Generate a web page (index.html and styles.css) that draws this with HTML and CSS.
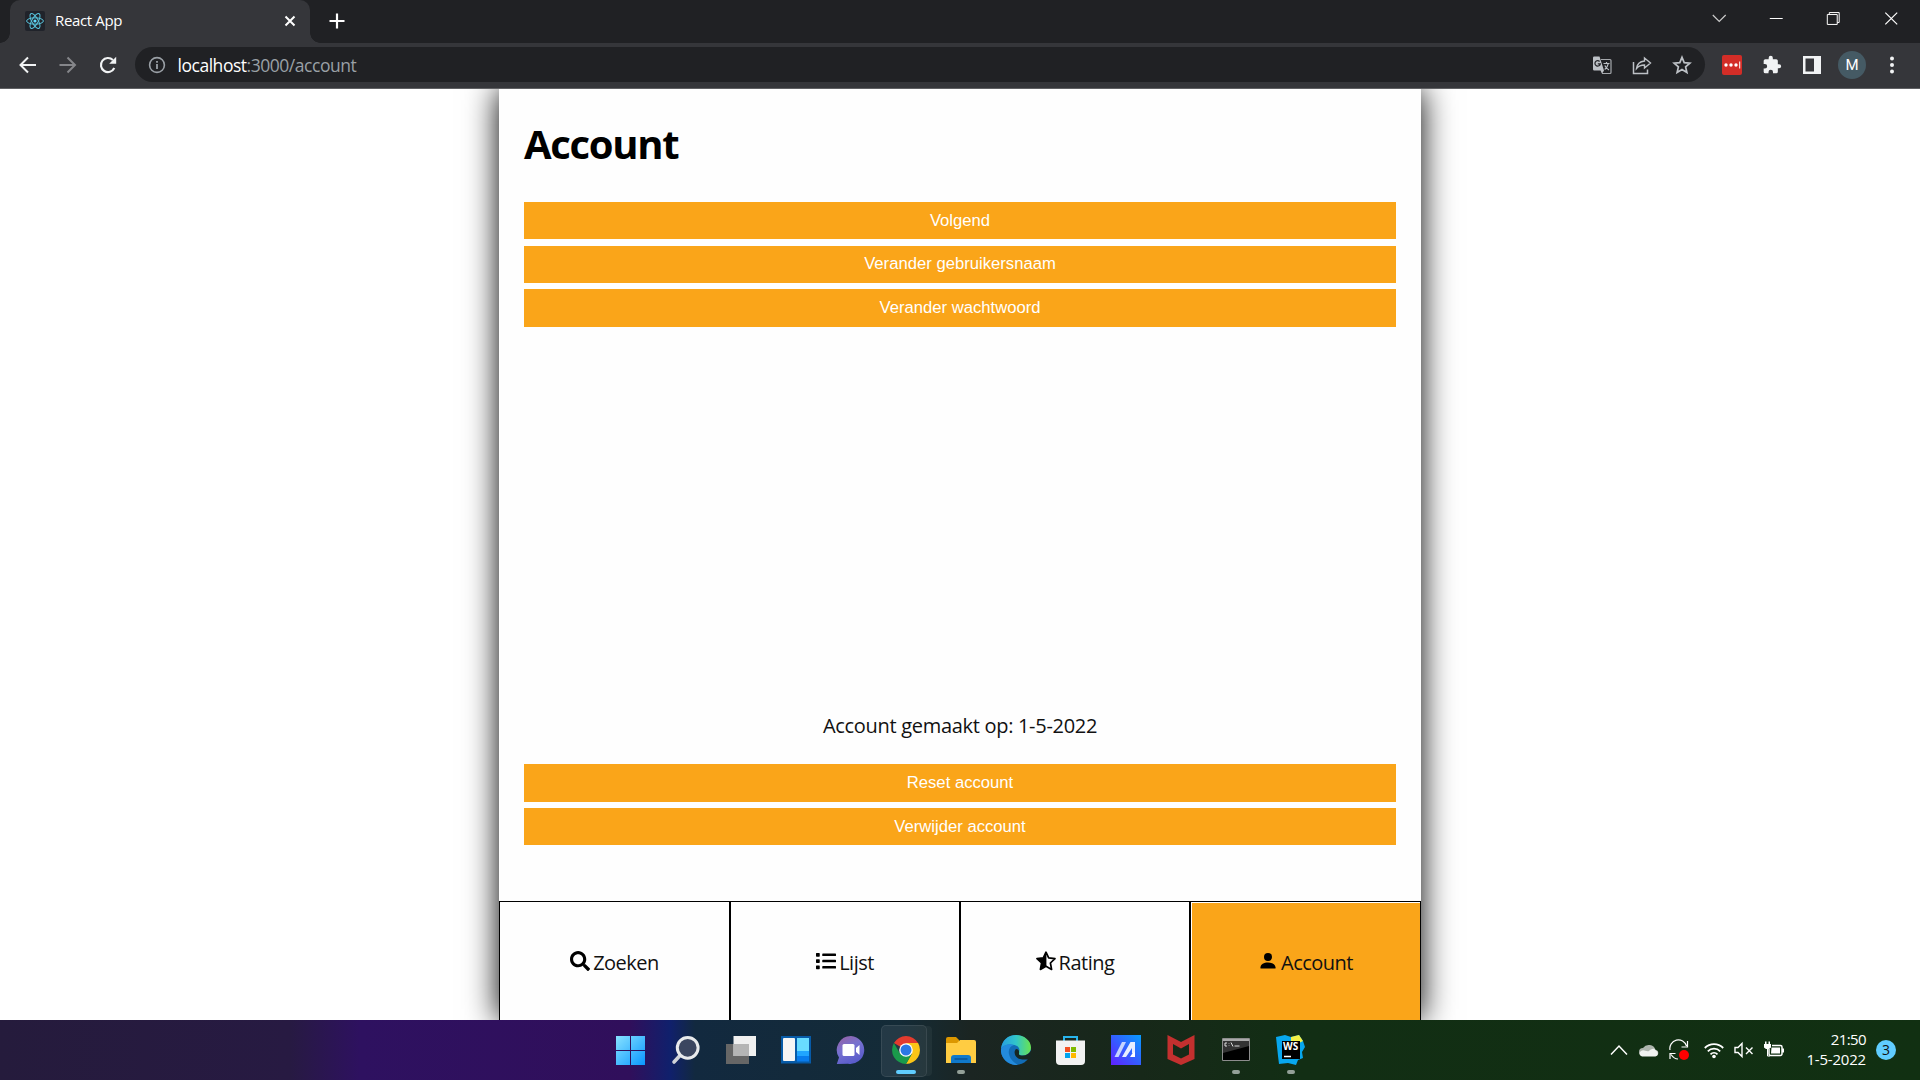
FILE: index.html
```html
<!DOCTYPE html>
<html lang="nl">
<head>
<meta charset="utf-8">
<title>React App</title>
<link rel="stylesheet" href="styles.css">
</head>
<body>
<header class="tabstrip">
  <div class="tab">
    <svg class="favicon" viewBox="0 0 20 20"><rect width="20" height="20" rx="2" fill="#20232a"/><g fill="none" stroke="#58c4dc" stroke-width="1"><ellipse cx="10" cy="10" rx="8.4" ry="3.2"/><ellipse cx="10" cy="10" rx="8.4" ry="3.2" transform="rotate(60 10 10)"/><ellipse cx="10" cy="10" rx="8.4" ry="3.2" transform="rotate(120 10 10)"/></g><circle cx="10" cy="10" r="1.6" fill="#61dafb"/></svg>
    <span class="tab-title">React App</span>
    <svg class="tab-close" viewBox="0 0 12 12"><path d="M1.5 1.5l9 9M10.5 1.5l-9 9" stroke="#fff" stroke-width="2"/></svg>
  </div>
  <svg class="new-tab" viewBox="0 0 16 16"><path d="M8 .5v15M.5 8h15" stroke="#fff" stroke-width="2.2"/></svg>
  <div class="window-controls">
    <svg viewBox="0 0 58 37"><path d="M23 15l6.500 6.500L36 15" fill="none" stroke="#ccc" stroke-width="1.2"/></svg>
    <svg viewBox="0 0 58 37"><path d="M22 18.500h13" stroke="#fff"/></svg>
    <svg viewBox="0 0 58 37"><path d="M22.500 14.500h10v10h-10zM24.500 14.500v-2h10v10h-2" fill="none" stroke="#fff"/></svg>
    <svg viewBox="0 0 58 37"><path d="M22.500 12.500l12 12M34.500 12.500l-12 12" stroke="#fff" stroke-width="1.2"/></svg>
  </div>
</header>
<div class="toolbar">
  <svg class="tool" viewBox="0 0 20 20"><path d="M18 10H3M10 2.500L2.500 10l7.500 7.500" fill="none" stroke="#f1f3f4" stroke-width="2"/></svg>
  <svg class="tool" viewBox="0 0 20 20"><path d="M1.500 10h15M9.500 2.500L17 10l-7.500 7.500" fill="none" stroke="#85868a" stroke-width="2"/></svg>
  <svg class="tool" viewBox="0 0 20 20"><path d="M16.300 13A7 7 0 1 1 14.900 5.100" fill="none" stroke="#f1f3f4" stroke-width="2.100"/><path d="M18.200 1.800v7h-7z" fill="#f1f3f4"/></svg>
  <div class="omnibox">
    <svg class="info" viewBox="0 0 18 18"><circle cx="9" cy="9" r="7.400" fill="none" stroke="#9aa0a6" stroke-width="1.600"/><path d="M9 8v5M9 5v1.800" stroke="#9aa0a6" stroke-width="1.800"/></svg>
    <span class="url"><b>localhost</b>:3000/account</span>
    <svg class="tool" viewBox="0 0 20 20"><path d="M9 4.500h9a1 1 0 0 1 1 1v12a1 1 0 0 1-1 1h-8" fill="none" stroke="#a5a8ac" stroke-width="1.200"/><path d="M2.200 1.500h5.300L12 15.500H2.200A1.200 1.200 0 0 1 1 14.300V2.700a1.200 1.200 0 0 1 1.200-1.200zM8.500 15.500H12l-2 3.300z" fill="#bdc1c6"/><path d="M7.600 6.500a2.700 2.700 0 1 0 .7 2.300H5.800" fill="none" stroke="#26272b" stroke-width="1.300"/><path d="M11.500 8.500h6M14.500 7v1.500M16.300 8.500c-.5 3-1.800 4.500-3.600 6M12.800 10.500c1 2 2.500 3.500 4.200 4.500" fill="none" stroke="#bdc1c6" stroke-width="1.200"/></svg>
    <svg class="tool" viewBox="0 0 20 20"><path d="M1.500 7v11.500h14v-4" fill="none" stroke="#bdc1c6" stroke-width="1.500"/><path d="M12.500 3l6 5-6 5v-3c-3.500 0-6 1-8 3.500C5 9.500 7.500 6.500 12.500 6z" fill="none" stroke="#bdc1c6" stroke-width="1.400"/></svg>
    <svg class="tool" viewBox="0 0 20 20"><path d="M10 2.300l2.200 5.300 5.700.5-4.300 3.800 1.300 5.600-4.900-3-4.900 3 1.300-5.600-4.300-3.800 5.700-.5z" fill="none" stroke="#bdc1c6" stroke-width="1.700"/></svg>
  </div>
  <svg class="tool ext" viewBox="0 0 20 20"><rect width="20" height="20" rx="2" fill="#d32d27"/><g fill="#fff"><circle cx="4" cy="10" r="1.700"/><circle cx="9" cy="10" r="1.700"/><circle cx="14" cy="10" r="1.700"/><path d="M17.200 6.500h1v7h-1z"/></g></svg>
  <svg class="tool" viewBox="0 0 24 24"><path d="M20.500 11H19V7a2 2 0 0 0-2-2h-4V3.500a2.500 2.500 0 0 0-5 0V5H4a2 2 0 0 0-2 2v3.800h1.500a2.700 2.700 0 0 1 0 5.400H2V20a2 2 0 0 0 2 2h3.800v-1.500a2.700 2.700 0 0 1 5.400 0V22H17a2 2 0 0 0 2-2v-4h1.500a2.500 2.500 0 0 0 0-5z" fill="#f1f3f4"/></svg>
  <svg class="tool" viewBox="0 0 20 20"><path d="M1 1h18v18H1zM3.500 3.500v13h8.500v-13z" fill="#f1f3f4" fill-rule="evenodd"/></svg>
  <span class="avatar">M</span>
  <svg class="tool" viewBox="0 0 20 20"><g fill="#f1f3f4"><circle cx="10" cy="3.500" r="2"/><circle cx="10" cy="10" r="2"/><circle cx="10" cy="16.500" r="2"/></g></svg>
</div>
<main class="viewport">
  <div class="app">
    <section class="page">
      <h1>Account</h1>
      <div class="actions"><button>Volgend</button><button>Verander gebruikersnaam</button><button>Verander wachtwoord</button></div>
      <p class="created">Account gemaakt op: 1-5-2022</p>
      <div class="actions"><button>Reset account</button><button>Verwijder account</button></div>
    </section>
    <nav class="nav">
      <a class="item"><svg viewBox="0 0 512 512"><path d="M505 442.700L405.300 343c-4.500-4.500-10.600-7-17-7H372c27.600-35.300 44-79.700 44-128C416 93.100 322.900 0 208 0S0 93.100 0 208s93.100 208 208 208c48.300 0 92.700-16.400 128-44v16.300c0 6.400 2.500 12.500 7 17l99.700 99.700c9.400 9.400 24.600 9.400 33.900 0l28.300-28.300c9.400-9.400 9.400-24.600.1-34zM208 336c-70.700 0-128-57.200-128-128 0-70.700 57.200-128 128-128 70.700 0 128 57.200 128 128 0 70.700-57.200 128-128 128z"/></svg><span>Zoeken</span></a>
      <a class="item"><svg viewBox="0 0 512 512"><path d="M80 368H16a16 16 0 0 0-16 16v64a16 16 0 0 0 16 16h64a16 16 0 0 0 16-16v-64a16 16 0 0 0-16-16zm0-320H16A16 16 0 0 0 0 64v64a16 16 0 0 0 16 16h64a16 16 0 0 0 16-16V64a16 16 0 0 0-16-16zm0 160H16a16 16 0 0 0-16 16v64a16 16 0 0 0 16 16h64a16 16 0 0 0 16-16v-64a16 16 0 0 0-16-16zm416 176H176a16 16 0 0 0-16 16v32a16 16 0 0 0 16 16h320a16 16 0 0 0 16-16v-32a16 16 0 0 0-16-16zm0-320H176a16 16 0 0 0-16 16v32a16 16 0 0 0 16 16h320a16 16 0 0 0 16-16V80a16 16 0 0 0-16-16zm0 160H176a16 16 0 0 0-16 16v32a16 16 0 0 0 16 16h320a16 16 0 0 0 16-16v-32a16 16 0 0 0-16-16z"/></svg><span>Lijst</span></a>
      <a class="item"><svg viewBox="0 0 20 20"><path d="M10 1.200l2.700 5.700 6.300.8-4.600 4.300 1.200 6.400-5.600-3.100-5.600 3.100L5.600 12 1 7.700l6.300-.8z" fill="none" stroke="#000" stroke-width="1.700" stroke-linejoin="round"/><path d="M10.400 1.200v14.300l-6 2.900L5.600 12 1 7.700l6.300-.8z"/></svg><span>Rating</span></a>
      <a class="item active"><svg viewBox="0 0 20 20"><circle cx="10" cy="6" r="4"/><path d="M2.500 17.500v-1.200c0-3 3.500-4.800 7.500-4.800s7.500 1.800 7.500 4.800v1.200z"/></svg><span>Account</span></a>
    </nav>
  </div>
</main>
<footer class="taskbar">
  <div class="apps">
    <div class="slot"><svg viewBox="0 0 30 30"><defs><linearGradient id="win" x2="30" y2="30" gradientUnits="userSpaceOnUse"><stop stop-color="#8ae3ff"/><stop offset="1" stop-color="#0796ff"/></linearGradient></defs><path d="M0 1h14v14H0zM15 1h14v14H15zM0 16h14v14H0zM15 16h14v14H15z" fill="url(#win)"/></svg></div>
    <div class="slot"><svg viewBox="0 0 30 30"><path d="M9 20.500l-6 6.500" stroke="#d0d3d8" stroke-width="3.600" stroke-linecap="round"/><circle cx="16.700" cy="12.800" r="10.400" fill="#3b4660" stroke="#e8eaec" stroke-width="3"/></svg></div>
    <div class="slot"><svg viewBox="0 0 30 30"><path d="M0 9h23v20H0z" fill="#666"/><path d="M7.500 1H30v20H7.500z" fill="#f0f0f0"/><path d="M7.500 9H23v12H7.500z" fill="#b5b5b5"/></svg></div>
    <div class="slot"><svg viewBox="0 0 30 30"><path d="M0 1h30v27.500H0z" fill="#075ba8"/><rect x="2" y="3" width="12" height="23" rx="1" fill="#f5f5f5"/><path d="M16 3h12v13H16z" fill="#69dcff"/><path d="M16 16h12v5H16z" fill="#20a5ff"/><path d="M16 21h12v5.500H16z" fill="#087ced"/></svg></div>
    <div class="slot"><svg viewBox="0 0 30 30"><defs><linearGradient id="chat" x2=".5" y2="1"><stop stop-color="#9a609f"/><stop offset=".5" stop-color="#7771d0"/><stop offset="1" stop-color="#5a5ccb"/></linearGradient></defs><path d="M15 1a14 14 0 1 1-3 27.800L.8 29l2.200-6.500A14 14 0 0 1 15 1z" fill="url(#chat)"/><rect x="6.500" y="9" width="12" height="12" rx="1.500" fill="#fff"/><path d="M20 13l3.500-3v10L20 17z" fill="#fff"/></svg></div>
    <div class="slot focused"><svg viewBox="0 0 30 30"><path d="M15 15L2.900 8A14 14 0 0 1 27.100 8z" fill="#e33b2e"/><path d="M15 8h12.100A14 14 0 0 1 15 29l6-10.500z" fill="#fbc516"/><path d="M9 18.500L2.900 8A14 14 0 0 0 15 29l5.500-9.500z" fill="#1a9a4b"/><circle cx="15" cy="15" r="6.800" fill="#fff"/><circle cx="15" cy="15" r="5.500" fill="#2b78e4"/></svg></div>
    <div class="slot running"><svg viewBox="0 0 30 30"><path d="M0 4a2 2 0 0 1 2-2h8l3 3v5H0z" fill="#dc9700"/><path d="M0 8h11l3-3h14a2 2 0 0 1 2 2v21H0z" fill="#ffcc42"/><path d="M5 28v-5a3 3 0 0 1 3-3h14a3 3 0 0 1 3 3v5z" fill="#1079cb"/><path d="M8.500 24h13" stroke="#074989" stroke-width="1.200"/></svg></div>
    <div class="slot"><svg viewBox="0 0 30 30"><defs><linearGradient id="edge" x2="1"><stop stop-color="#279ee1"/><stop offset=".5" stop-color="#31c5ca"/><stop offset="1" stop-color="#69e34f"/></linearGradient></defs><circle cx="15" cy="15" r="15" fill="#126cb5"/><path d="M0 14C1 5 7 0 15 0c8 0 15 5.500 15 12.500 0 5-4 8-8 8-3 0-5-1-4.500-2.500 2-3 1-7-4-8C8 8.500 2 10 0 14z" fill="url(#edge)"/><path d="M0 14c2-4 8-6 13-4-4 1-6 5-5 9 1 6 6 9 9 11C8 31-1 23 0 14z" fill="#238bdd"/><path d="M18 18.500c-.5 1.500 1.500 2 4 2 3 0 6-1.500 8-5v8l-2 .5c-2 .5-5 1-9 0-5-1.200-7-7-4-10 3 0 3.500 2.500 3 4.500z" fill="#172722"/></svg></div>
    <div class="slot"><svg viewBox="0 0 30 30"><path d="M8 7V2h13v5" fill="none" stroke="#28b5ed" stroke-width="2"/><path d="M0 5.500h29V26a4 4 0 0 1-4 4H4a4 4 0 0 1-4-4z" fill="#f2f2f2"/><path d="M9 12h5v5H9z" fill="#f25022"/><path d="M15 12h5v5h-5z" fill="#7fba00"/><path d="M9 18h5v5H9z" fill="#00a4ef"/><path d="M15 18h5v5h-5z" fill="#ffb900"/></svg></div>
    <div class="slot"><svg viewBox="0 0 30 30"><defs><linearGradient id="asus" y1="1" x2="1" y2="0"><stop stop-color="#6020ff"/><stop offset="1" stop-color="#079cff"/></linearGradient></defs><path d="M0 0h30v30H0z" fill="url(#asus)"/><path d="M3.500 22L11 7h4L7.500 22z" fill="#c5d4ff"/><path d="M11 22L19.500 7H24v11h-3v-5L15 22z" fill="#e7edff"/><path d="M19 22l3-4.500h2V22z" fill="#fff"/></svg></div>
    <div class="slot"><svg viewBox="0 0 30 30"><path d="M1.500 0L15 7 28.500 0v24L15 30 1.500 24zM7 9v10.500l8 4 8-4V9l-8 4.500z" fill="#c3302f" fill-rule="evenodd"/></svg></div>
    <div class="slot running"><svg viewBox="0 0 30 30"><path d="M1.500 3.500h27v22h-27z" fill="#000" stroke="#8d8d8d"/><path d="M2 4h26v2H2z" fill="#aaa"/><path d="M2 6h26v5L2 18z" fill="#333"/><path d="M6 8H4v3h2M8 8.500v.5M8 10.500v.5M10 7.500l2 4M13.500 11h5" fill="none" stroke="#ddd"/></svg></div>
    <div class="slot running"><svg viewBox="0 0 30 30"><path d="M0 2l9-2 6 2 8-2 4 6 2 6-3 5 1 6-5 2-2 5-8-2-9 1-1-8z" fill="#08a7ee"/><path d="M15 2l8-2 4 6-4 2-8-2z" fill="#f2f045"/><path d="M6 6h18v18H6z" fill="#000"/><path d="M8 21.500h7" stroke="#fff" stroke-width="1.500"/><text class="ws" x="7" y="15">WS</text></svg></div>
  </div>
  <div class="tray">
    <svg class="t-up" viewBox="0 0 18 20"><path d="M1 14.500L9 6l8 8.500" fill="none" stroke="#fff" stroke-width="1.500"/></svg>
    <svg class="t-cloud" viewBox="0 0 20 20"><path d="M4 16a4 4 0 0 1 0-8 7 7 0 0 1 12.500 2A3 3 0 0 1 16 16z" fill="#aeb5ae"/><path d="M3 16.500a3 3 0 0 1-1-5.500c3-2 5 1 8 0 2-2 5-3.500 7-.5a3.200 3.200 0 0 1-.5 6z" fill="#f1f3f1"/></svg>
    <svg class="t-sync" viewBox="0 0 22 22"><path d="M2 11A8.500 8.500 0 0 1 18.500 7M19.500 2v6h-6M2 20v-5.500h5.500M3 15.500c2 3 4 4.500 7 4.500" fill="none" stroke="#fff" stroke-width="1.200"/><circle cx="16" cy="16" r="5" fill="#f00"/></svg>
    <svg class="t-wifi" viewBox="0 0 20 20"><path d="M.8 8a13 13 0 0 1 18.400 0M3.800 11.300a8.700 8.700 0 0 1 12.400 0M6.500 14.300a5 5 0 0 1 7 0" fill="none" stroke="#fff" stroke-width="1.800"/><circle cx="10" cy="16.500" r="1.800" fill="#fff"/></svg>
    <svg class="t-vol" viewBox="0 0 20 20"><path d="M1 7.500h3l4-4v13l-4-4H1zM12 7.500l6.500 6.500M18.500 7.500L12 14" fill="none" stroke="#fff" stroke-width="1.400"/></svg>
    <svg class="t-bat" viewBox="0 0 20 20"><path d="M8 5.500h8.500a1.500 1.500 0 0 1 1.500 1.500v7a1.500 1.500 0 0 1-1.500 1.500h-10A1.500 1.500 0 0 1 5 14V9" fill="none" stroke="#fff" stroke-width="1.500"/><path d="M7.500 7.500H16v6H7zM18 8.500h2v4h-2zM0 4h7v3.500L5 9H2L0 7.500zM1 1.500h1.500V4H1zM4.500 1.500H6V4H4.500z" fill="#fff"/><path d="M3.500 9v7H6" fill="none" stroke="#fff"/></svg>
    <div class="clock"><span class="time">21:50</span><span class="date">1-5-2022</span></div>
    <span class="badge">3</span>
  </div>
</footer>
</body>
</html>
```
FILE: styles.css
```css
* { box-sizing: border-box; }
body {
  margin: 0;
  width: 1920px;
  height: 1080px;
  overflow: hidden;
  display: flex;
  flex-direction: column;
  background: #fff;
  font-family: "Open Sans", "Noto Sans", sans-serif;
}
svg { display: block; flex: none; }

.tabstrip { height: 43px; flex: none; display: flex; background: #202124; padding-left: 10px; }
.tab {
  position: relative;
  width: 300px;
  height: 43px;
  display: flex;
  align-items: center;
  padding: 0 15px 1px;
  background: #35363a;
  border-radius: 10px 10px 0 0;
}
.tab::before, .tab::after {
  content: "";
  position: absolute;
  bottom: 0;
  width: 10px;
  height: 10px;
}
.tab::before { left: -10px; background: radial-gradient(circle at 0 0, #202124 9.5px, #35363a 10px); }
.tab::after { right: -10px; background: radial-gradient(circle at 100% 0, #202124 9.5px, #35363a 10px); }
.favicon { width: 20px; height: 20px; }
.tab-title { margin-left: 10px; padding-bottom: 2px; flex: 1; font-size: 15px; letter-spacing: -.35px; color: #fff; }
.tab-close { width: 12px; height: 12px; margin-right: -1px; }
.new-tab { width: 16px; height: 16px; margin: 13px 0 0 19px; }
.window-controls { margin-left: auto; display: flex; }
.window-controls svg { width: 57.5px; height: 37px; }

.toolbar {
  height: 46px;
  flex: none;
  display: flex;
  align-items: center;
  gap: 20px;
  padding: 0 18px 2px 18px;
  background: #35363a;
  border-bottom: 1px solid #5f6063;
}
.tool { width: 20px; height: 20px; }
.omnibox {
  flex: 1;
  height: 35px;
  display: flex;
  align-items: center;
  gap: 20px;
  padding: 0 13px 0 13px;
  margin-left: -3px;
  background: #202124;
  border-radius: 18px;
}
.info { width: 18px; height: 18px; }
.url { flex: 1; margin-left: -8.5px; font-size: 17.5px; letter-spacing: -.47px; color: #9aa0a6; }
.url b { font-weight: 400; color: #fff; }
.ext { margin-left: -3px; }
.avatar {
  width: 28px;
  height: 28px;
  margin: 0 -4px;
  border-radius: 50%;
  background: #455a64;
  color: #fff;
  font: 15px/28px Roboto, sans-serif;
  text-align: center;
}

.viewport { height: 931px; flex: none; overflow: hidden; display: flex; justify-content: center; }
.app {
  width: 922px;
  display: flex;
  flex-direction: column;
  background: #fefefe;
  box-shadow: 0 0 31px #000;
}
.page { flex: 1; display: flex; flex-direction: column; padding: 0 25px 55.65px; }
h1 { margin: 28px 0 30.9px; font-size: 40px; line-height: 54px; letter-spacing: -1.3px; color: #000; }
.actions { display: flex; flex-direction: column; gap: 6.25px; }
button {
  height: 37.5px;
  border: 0;
  padding: 0;
  background: #faa519;
  color: #fff;
  font: 16.67px "Liberation Sans", Arial, sans-serif;
}
.created { margin: auto 0 25px; font-size: 20px; line-height: 27px; letter-spacing: -.3px; text-align: center; color: #111; }
.nav { display: grid; grid-template-columns: 231px 230px 230px 231px; height: 119px; }
.item {
  display: flex;
  align-items: center;
  justify-content: center;
  gap: 3px;
  padding-top: 2px;
  border: 1px solid #000;
  border-bottom: 0;
  font-size: 20px;
  letter-spacing: -.5px;
  color: #111;
}
.item svg { width: 20px; height: 20px; margin-bottom: 2px; }
.item.active { background: #faa519; box-shadow: inset 1px 1px #fff; }

.taskbar {
  height: 60px;
  flex: none;
  display: flex;
  padding-left: 603px;
  background: linear-gradient(90deg, #251b3c 0, #271a42 290px, #2e1160 360px, #300f5b 630px, #10206c 670px, #12293f 695px, #142b37 900px, #1b2522 970px, #172819 1140px, #122e14 1300px, #113012 100%);
}
.apps { display: flex; }
.slot { position: relative; width: 55px; display: flex; padding-left: 13px; align-items: center; }
.slot svg { width: 30px; height: 30px; position: relative; }
.focused::before {
  content: "";
  position: absolute;
  left: 3px;
  top: 5px;
  width: 44px;
  height: 50px;
  border: 1px solid #ffffff16;
  border-radius: 5px;
  background: #ffffff12;
  box-shadow: 6px 0 0 -1px #ffffff0c;
}
.focused::after, .running::after {
  content: "";
  position: absolute;
  left: 24px;
  bottom: 6px;
  width: 8px;
  height: 4px;
  border-radius: 2px;
  background: #93a098;
}
.focused::after { left: 18px; width: 20px; background: #60cdff; }
.ws { font: 700 10px "Open Sans", sans-serif; fill: #fff; }
.tray { flex: 1; display: flex; align-items: center; padding-left: 292px; color: #fff; }
.t-up { width: 18px; height: 20px; }
.t-cloud { width: 20px; height: 20px; margin-left: 11px; }
.t-sync { width: 22px; height: 22px; margin-left: 9px; }
.t-wifi { width: 20px; height: 20px; margin-left: 14px; }
.t-vol { width: 20px; height: 20px; margin-left: 10px; }
.t-bat { width: 20px; height: 20px; margin-left: 10px; }
.clock { width: 82px; display: flex; flex-direction: column; align-items: flex-end; font-size: 15px; line-height: 20px; padding-bottom: 3px; }
.time { letter-spacing: -.6px; }
.date { letter-spacing: -.2px; }
.badge {
  width: 20px;
  height: 20px;
  margin-left: 10px;
  border-radius: 50%;
  background: #60cdff;
  color: #111;
  font-size: 14px;
  line-height: 20px;
  text-align: center;
}
```
